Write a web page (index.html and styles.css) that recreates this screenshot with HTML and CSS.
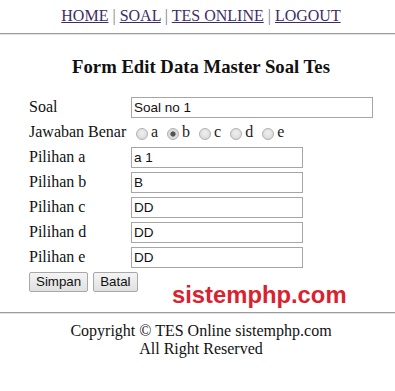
FILE: index.html
```html
<!DOCTYPE html>
<html>
<head>
<meta charset="utf-8">
<title>Form Edit Data Master Soal Tes</title>
<link rel="stylesheet" href="styles.css">
</head>
<body>
<div class="page">
  <nav class="nav">
    <a href="#">HOME</a> <span class="sep">|</span> <a href="#">SOAL</a> <span class="sep">|</span> <a href="#">TES ONLINE</a> <span class="sep">|</span> <a href="#">LOGOUT</a>
  </nav>
  <div class="rule rule-top"></div>
  <main class="content">
    <h3 class="title">Form Edit Data Master Soal Tes</h3>
    <form class="form">
      <label class="lbl">Soal</label>
      <div class="field"><input class="txt txt-wide" type="text" value="Soal no 1"></div>

      <span class="lbl">Jawaban Benar</span>
      <div class="field radios">
        <label class="opt"><input class="radio" type="radio" name="jwb">a</label>
        <label class="opt"><input class="radio" type="radio" name="jwb" checked>b</label>
        <label class="opt"><input class="radio" type="radio" name="jwb">c</label>
        <label class="opt"><input class="radio" type="radio" name="jwb">d</label>
        <label class="opt"><input class="radio" type="radio" name="jwb">e</label>
      </div>

      <label class="lbl">Pilihan a</label>
      <div class="field"><input class="txt" type="text" value="a 1"></div>

      <label class="lbl">Pilihan b</label>
      <div class="field"><input class="txt" type="text" value="B"></div>

      <label class="lbl">Pilihan c</label>
      <div class="field"><input class="txt" type="text" value="DD"></div>

      <label class="lbl">Pilihan d</label>
      <div class="field"><input class="txt" type="text" value="DD"></div>

      <label class="lbl">Pilihan e</label>
      <div class="field"><input class="txt" type="text" value="DD"></div>

      <div class="actions">
        <button class="btn" type="button">Simpan</button>
        <button class="btn" type="button">Batal</button>
      </div>
    </form>
  </main>
  <div class="rule rule-bottom"></div>
  <footer class="footer">
    <div>Copyright &copy; TES Online sistemphp.com</div>
    <div>All Right Reserved</div>
  </footer>
  <div class="watermark">sistemphp.com</div>
</div>
</body>
</html>
```

FILE: styles.css
```css
html, body {
  margin: 0;
  padding: 0;
  background: #ffffff;
}

body {
  font-family: "Liberation Serif", "Times New Roman", serif;
  font-size: 16px;
  line-height: 18px;
  color: #111111;
}

.page {
  position: relative;
  width: 395px;
  height: 391px;
  overflow: hidden;
}

.nav {
  margin: 7px 0 0 0;
  padding-left: 7px;
  text-align: center;
  height: 18px;
}

.nav a {
  color: #3e2c66;
  text-decoration: underline;
}

.nav .sep {
  color: #7a7a7a;
}

.rule {
  height: 0;
  border-top: 1px solid #9c9c9c;
  border-bottom: 1px solid #e4e4e4;
}

.rule-top {
  margin-top: 8px;
}

.title {
  margin: 21px 0 0 0;
  padding-left: 7px;
  text-align: center;
  font-size: 18.72px;
  line-height: 22px;
  font-weight: bold;
  color: #111111;
}

.form {
  display: grid;
  grid-template-columns: 102px auto;
  grid-auto-rows: 21px;
  row-gap: 4px;
  margin: 19px 0 0 29px;
}

.lbl {
  padding-top: 1px;
  line-height: 18px;
  white-space: nowrap;
}

.field {
  display: flex;
  align-items: flex-start;
}

.txt {
  box-sizing: border-box;
  width: 172px;
  height: 21px;
  margin: 0;
  padding: 1px 2px;
  border: 1px solid #a6a6a6;
  font-family: "Liberation Sans", Arial, sans-serif;
  font-size: 13.5px;
  color: #111111;
  background: #ffffff;
}

.txt-wide {
  width: 242px;
}

.radios {
  align-items: baseline;
  padding-top: 1px;
  line-height: 18px;
}

.opt {
  display: inline-flex;
  align-items: baseline;
  margin-right: 4px;
  color: #222222;
}

.radio {
  -webkit-appearance: none;
  appearance: none;
  box-sizing: border-box;
  width: 12px;
  height: 12px;
  margin: 0 3px 2px 5px;
  border: 1px solid #b0b0b0;
  border-radius: 50%;
  background: radial-gradient(circle at 50% 40%, #f0f0f0 0%, #d4d4d4 100%);
  position: relative;
  top: 1px;
  align-self: flex-end;
}

.radio:checked {
  background: radial-gradient(circle, #4a4a4a 0, #5a5a5a 2.2px, #d8d8d8 3px, #e4e4e4 100%);
}

.actions {
  grid-column: 1 / 3;
  display: flex;
  gap: 5px;
  align-items: flex-start;
}

.btn {
  box-sizing: border-box;
  height: 20px;
  margin: 0;
  padding: 0 6px;
  border: 1px solid #a8a8a8;
  border-radius: 2px;
  background: linear-gradient(#f4f4f4, #e0e0e0);
  font-family: "Liberation Sans", Arial, sans-serif;
  font-size: 13.33px;
  line-height: 18px;
  color: #111111;
}

.watermark {
  position: absolute;
  left: 172px;
  top: 282px;
  font-family: "Liberation Sans", Arial, sans-serif;
  font-weight: bold;
  font-size: 23.8px;
  line-height: 26px;
  color: #d8232f;
  white-space: nowrap;
}

.rule-bottom {
  margin-top: 19px;
}

.footer {
  margin-top: 8px;
  padding-left: 7px;
  text-align: center;
  line-height: 18px;
  color: #111111;
}
```
